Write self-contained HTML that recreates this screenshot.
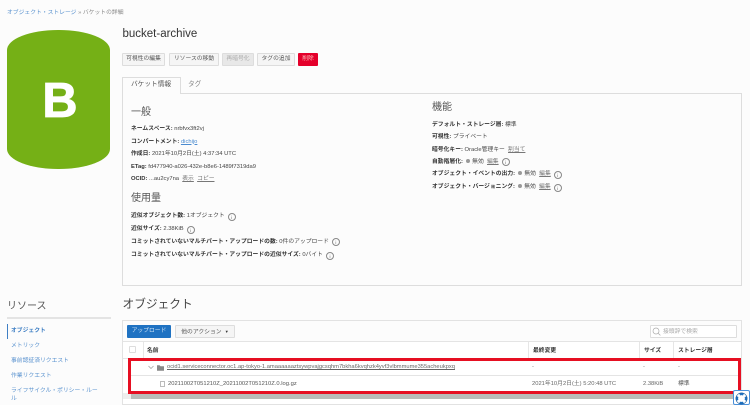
<!DOCTYPE html>
<html lang="ja"><head><meta charset="utf-8">
<style>
html,body{margin:0;padding:0;width:750px;height:405px;overflow:hidden;background:#fcfcfc}
body{position:relative;font-family:"Liberation Sans","Noto Sans CJK JP",sans-serif;font-size:5.8px;color:#444}
#w{position:absolute;left:0;top:0;width:750px;height:405px;filter:blur(.3px)}
.t{position:absolute;white-space:nowrap;line-height:10px;height:10px;margin-top:1px}
.b{position:absolute;box-sizing:border-box}
b{font-weight:bold;color:#333}
u{color:#777}
.btn{position:absolute;box-sizing:border-box;top:52.5px;height:13px;background:#f5f5f5;border:1px solid #ddd;border-radius:1px;text-align:center;line-height:11.5px;color:#555;font-size:5.8px;white-space:nowrap}
.h{color:#555;font-size:10px;line-height:14px;height:14px}
.i{display:inline-block;box-sizing:border-box;width:8px;height:8px;border:.6px solid #888;border-radius:50%;margin-left:3px;vertical-align:-1.5px;font-size:4.5px;line-height:7px;text-align:center;color:#666}
.d{display:inline-block;width:4px;height:4px;border-radius:50%;background:#999;margin:0 1px 0 1px}
.n{color:#5b93cf;font-size:5.8px}
</style></head><body><div id="w">

<div class="t" style="left:7px;top:7px"><span style="color:#5b93cf">オブジェクト・ストレージ</span> <span style="color:#888">» バケットの詳細</span></div>

<div class="b" style="left:7px;top:30px;width:103px;height:139px;background:#75b016;border-radius:51px / 20px"></div>
<div class="t" style="left:7px;top:75px;width:106px;text-align:center;color:#fff;font-weight:bold;font-size:49px;line-height:50px;height:50px;-webkit-text-stroke:.8px #fff">B</div>

<div class="t" style="left:122.5px;top:26px;font-size:11.5px;line-height:14px;height:14px;color:#333">bucket-archive</div>

<div class="btn" style="left:122px;width:43px">可視性の編集</div>
<div class="btn" style="left:169px;width:50px">リソースの移動</div>
<div class="btn" style="left:222px;width:32px;background:#e8e8e8;color:#aaa">再暗号化</div>
<div class="btn" style="left:257px;width:38px">タグの追加</div>
<div class="btn" style="left:298px;width:20px;background:#e4002b;border-color:#e4002b;color:#fbb">削除</div>

<!-- panel -->
<div class="b" style="left:180px;top:93px;width:562px;height:1px;background:#ddd"></div>
<div class="b" style="left:122px;top:93px;width:620px;height:193px;border:1px solid #ddd;border-top:0"></div>
<div class="b" style="left:122px;top:77px;width:58.5px;height:17px;border:1px solid #ddd;border-bottom:0;background:#fcfcfc"></div>
<div class="t" style="left:131px;top:79px;font-size:6.7px;color:#555">バケット情報</div>
<div class="t" style="left:188px;top:79px;font-size:6.7px;color:#888">タグ</div>

<div class="t h" style="left:131px;top:105px">一般</div>
<div class="t" style="left:131px;top:123px"><b>ネームスペース:</b> nrbfvx3ft2vj</div>
<div class="t" style="left:131px;top:135.5px"><b>コンパートメント:</b> <span style="color:#4a8bd0;text-decoration:underline">dichijo</span></div>
<div class="t" style="left:131px;top:148px"><b>作成日:</b> 2021年10月2日(土) 4:37:34 UTC</div>
<div class="t" style="left:131px;top:160.5px"><b>ETag:</b> fd477940-a026-432e-b8e6-1489f7319da9</div>
<div class="t" style="left:131px;top:173px"><b>OCID:</b> ...au2cy7na &nbsp;<u>表示</u> &nbsp;<u>コピー</u></div>

<div class="t h" style="left:131px;top:191px">使用量</div>
<div class="t" style="left:131px;top:210px"><b>近似オブジェクト数:</b> 1オブジェクト<span class="i">i</span></div>
<div class="t" style="left:131px;top:223px"><b>近似サイズ:</b> 2.38KiB<span class="i">i</span></div>
<div class="t" style="left:131px;top:235.5px"><b>コミットされていないマルチパート・アップロードの数:</b> 0件のアップロード<span class="i">i</span></div>
<div class="t" style="left:131px;top:249px"><b>コミットされていないマルチパート・アップロードの近似サイズ:</b> 0バイト<span class="i">i</span></div>

<div class="t h" style="left:432px;top:100px">機能</div>
<div class="t" style="left:432px;top:118.5px"><b>デフォルト・ストレージ層:</b> 標準</div>
<div class="t" style="left:432px;top:131px"><b>可視性:</b> プライベート</div>
<div class="t" style="left:432px;top:143.5px"><b>暗号化キー:</b> Oracle管理キー &nbsp;<u>割当て</u></div>
<div class="t" style="left:432px;top:155.5px"><b>自動階層化:</b> <span class="d"></span> 無効 &nbsp;<u>編集</u><span class="i">i</span></div>
<div class="t" style="left:432px;top:168px"><b>オブジェクト・イベントの出力:</b> <span class="d"></span> 無効 &nbsp;<u>編集</u><span class="i">i</span></div>
<div class="t" style="left:432px;top:181px"><b>オブジェクト・バージョニング:</b> <span class="d"></span> 無効 &nbsp;<u>編集</u><span class="i">i</span></div>

<!-- resources -->
<div class="t h" style="left:7px;top:299px;color:#555">リソース</div>
<div class="b" style="left:7px;top:317px;width:104px;height:1.5px;background:#e4e4e4"></div>
<div class="b" style="left:6.5px;top:324px;width:1px;height:15px;background:#3f7fc4"></div>
<div class="t n" style="left:11px;top:325px;font-weight:bold;color:#3f7fc4">オブジェクト</div>
<div class="t n" style="left:11px;top:340px">メトリック</div>
<div class="t n" style="left:11px;top:355px">事前認証済リクエスト</div>
<div class="t n" style="left:11px;top:369.5px">作業リクエスト</div>
<div class="t n" style="left:11px;top:384.5px">ライフサイクル・ポリシー・ルー</div>
<div class="t n" style="left:11px;top:393px">ル</div>

<!-- objects -->
<div class="t" style="left:122.5px;top:296px;font-size:11.7px;line-height:15px;height:15px;color:#444">オブジェクト</div>
<div class="b" style="left:122px;top:320px;width:620px;height:85px;border:1px solid #e2e2e2;background:#fff"></div>
<div class="b" style="left:123px;top:321px;width:618px;height:20.5px;background:#fcfcfc;border-bottom:1px solid #e4e4e4"></div>
<div class="btn" style="left:127px;top:325px;width:44px;height:12.5px;background:#1f72c2;border-color:#1f72c2;color:#cfe4f7">アップロード</div>
<div class="btn" style="left:175px;top:325px;width:60px;height:12.5px">他のアクション &nbsp;<span style="font-size:4px;color:#333;vertical-align:.5px">▼</span></div>
<div class="b" style="left:650px;top:325px;width:87px;height:12.5px;background:#fff;border:1px solid #ddd;border-radius:1px"></div>
<svg class="b" style="left:652px;top:327px" width="9" height="9" viewBox="0 0 9 9" fill="none" stroke="#aaa" stroke-width=".7"><circle cx="4" cy="4" r="3"/><path d="M6.2 6.2L8.4 8.4"/></svg>
<div class="t" style="left:663px;top:325.5px;color:#aaa">接頭辞で検索</div>

<div class="b" style="left:123px;top:341.5px;width:618px;height:17px;background:#fff;border-bottom:1px solid #e4e4e4"></div>
<div class="b" style="left:129px;top:346px;width:7px;height:7px;border:1px solid #ddd;border-radius:1px;background:#fff"></div>
<div class="b" style="left:143px;top:342px;width:1px;height:16px;background:#e6e6e6"></div>
<div class="b" style="left:528px;top:342px;width:1px;height:16px;background:#e6e6e6"></div>
<div class="b" style="left:639px;top:342px;width:1px;height:16px;background:#e6e6e6"></div>
<div class="b" style="left:673px;top:342px;width:1px;height:16px;background:#e6e6e6"></div>
<div class="t" style="left:147px;top:344.5px"><b>名前</b></div>
<div class="t" style="left:533px;top:344.5px"><b>最終変更</b></div>
<div class="t" style="left:644px;top:344.5px"><b>サイズ</b></div>
<div class="t" style="left:678px;top:344.5px"><b>ストレージ層</b></div>

<div class="b" style="left:130px;top:375px;width:610px;height:1px;background:#e4e4e4"></div>
<svg class="b" style="left:148px;top:363.5px" width="20" height="8" viewBox="0 0 20 8" fill="none"><path d="M0.5 2L3 4.5L5.5 2" stroke="#999" stroke-width=".7"/><path d="M9 1.2h2.5l1 1H16v4.6H9z" fill="#888"/></svg>
<div class="t" style="left:167px;top:361px;color:#666;text-decoration:underline;font-size:5.75px">ocid1.serviceconnector.oc1.ap-tokyo-1.amaaaaaaztsywpvajgcsqhm7bkha6kvqhzk4yvf3vlbmmume355acheukpxq</div>
<div class="t" style="left:532px;top:361px;color:#777">-</div>
<div class="t" style="left:643px;top:361px;color:#777">-</div>
<div class="t" style="left:678px;top:361px;color:#777">-</div>
<div class="b" style="left:160px;top:380.5px;width:5px;height:6.5px;border:.7px solid #bbb"></div>
<div class="t" style="left:168px;top:378px;color:#555">20211002T051210Z_20211002T051210Z.0.log.gz</div>
<div class="t" style="left:532px;top:378px;color:#666">2021年10月2日(土) 5:20:48 UTC</div>
<div class="t" style="left:643px;top:378px;color:#666">2.38KiB</div>
<div class="t" style="left:678px;top:378px;color:#555">標準</div>

<div class="b" style="left:123px;top:393px;width:618px;height:6px;background:#b9bcb9"></div>
<div class="b" style="left:123px;top:393px;width:8px;height:6px;background:#eee"></div>
<div class="b" style="left:128px;top:358px;width:613px;height:36px;border:3px solid #e60f22"></div>

<div class="b" style="left:733px;top:390px;width:17px;height:15px;background:#fff;border:1px solid #4a90d9;border-radius:2px"></div>
<svg class="b" style="left:735px;top:391.5px" width="13" height="13" viewBox="0 0 13 13" fill="none"><circle cx="6.5" cy="6.5" r="4.6" stroke="#1f72c2" stroke-width="2.4" stroke-dasharray="4 3.2" stroke-dashoffset="2"/><circle cx="6.5" cy="6.5" r="5.6" stroke="#1f5f9f" stroke-width=".6"/></svg>
</div></body></html>
